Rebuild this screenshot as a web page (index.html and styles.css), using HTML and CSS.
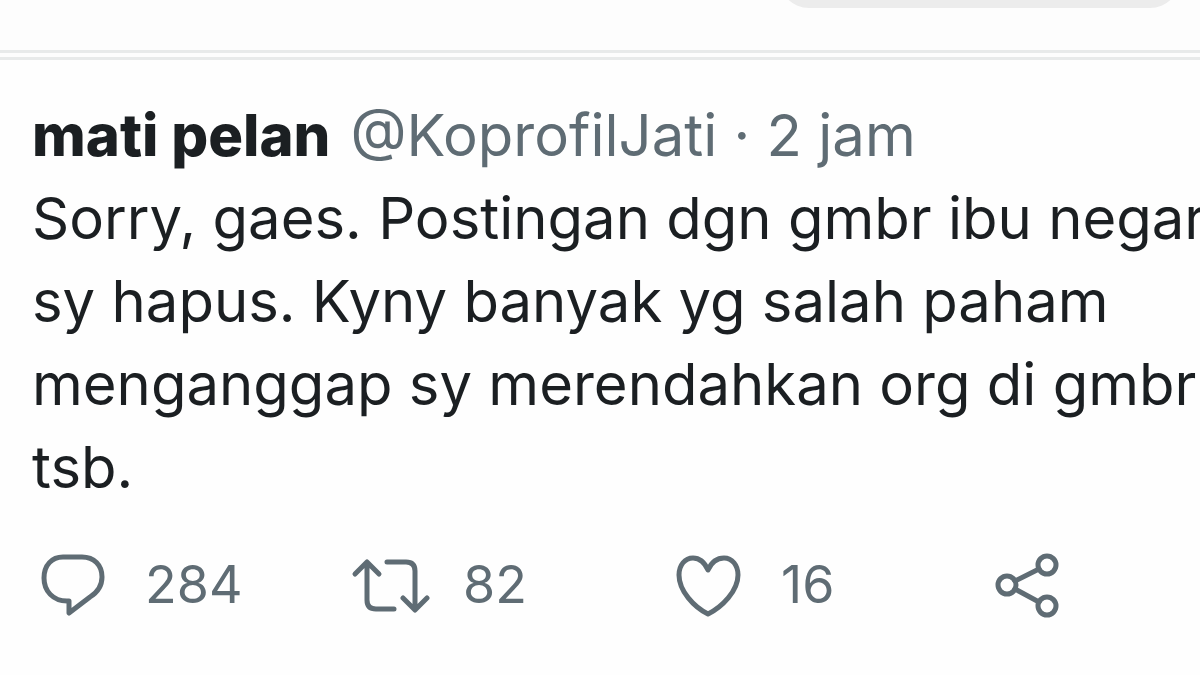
FILE: index.html
```html
<!DOCTYPE html>
<html lang="id">

<head>
    <meta charset="UTF-8">
    <meta name="viewport" content="width=device-width, initial-scale=1.0">
    <title>mati pelan</title>
    <link rel="stylesheet" href="styles.css">
</head>

<body>
    <header class="topbar">
        <div class="pill"></div>
    </header>

    <article class="tweet">
        <div class="tweet-head">
            <strong class="name">mati pelan</strong>
            <span class="meta">@KoprofilJati · 2 jam</span>
        </div>
        <p class="tweet-text">Sorry, gaes. Postingan dgn gmbr ibu negar<br>
            sy hapus. Kyny banyak yg salah paham<br>
            menganggap sy merendahkan org di gmbr<br>
            tsb.</p>

        <div class="actions">
            <button class="action" type="button" aria-label="Balas">
                <svg class="icon" viewBox="0 0 80 70">
                    <path d="M31 7H50C62 7 70 15 70 27C70 36 66 42 58 47L37 63V51H35C21 51 12 41 12 28C12 15 20 7 31 7Z" />
                </svg>
                <span>284</span>
            </button>
            <button class="action" type="button" aria-label="Retweet">
                <svg class="icon" viewBox="0 0 80 70">
                    <path d="M5 24L17 12L29 24M17 13V50Q17 59 26 59H44" />
                    <path d="M37 12H56Q65 12 65 21V59M53 48L65 60L77 48" />
                </svg>
                <span>82</span>
            </button>
            <button class="action" type="button" aria-label="Suka">
                <svg class="icon" viewBox="0 0 80 70">
                    <path d="M40 20C36 11 31 8 25 8C17 8 11 15 11 25C11 41 26 57 40 64C54 57 70 41 70 25C70 15 64 8 56 8C49 8 44 11 40 20Z" />
                </svg>
                <span>16</span>
            </button>
            <button class="action" type="button" aria-label="Bagikan">
                <svg class="icon" viewBox="0 0 80 70">
                    <circle cx="21" cy="35" r="9" />
                    <circle cx="61" cy="15" r="9" />
                    <circle cx="61" cy="56" r="9" />
                    <path d="M29 31L53 19M29 39L53 52" />
                </svg>
            </button>
        </div>
    </article>
</body>

</html>
```

FILE: styles.css
```css
:root {
    --bg: #fefefe;
    --bar: #fdfdfd;
    --pill: #ececec;
    --line: #e8eaea;
    --text: #1b1f22;
    --muted: #5f6c74;
}

body {
    font-family: Inter, sans-serif;
    background-color: var(--bg);
    color: var(--text);
    margin: 0;
    overflow: hidden;
}

.topbar {
    display: flex;
    justify-content: flex-end;
    height: 50px;
    padding-right: 20px;
    background-color: var(--bar);
    border-bottom: 10px double var(--line);
    overflow: hidden;
}

.pill {
    width: 34%;
    height: 60px;
    margin-top: -52px;
    border-radius: 30px;
    background-color: var(--pill);
}

.tweet {
    padding: 34px 34px 34px 32px;
}

.tweet-head,
.tweet-text {
    margin: 0;
    font-size: 58px;
    line-height: 83px;
    white-space: nowrap;
}

.tweet-head {
    display: flex;
    align-items: baseline;
    gap: 20px;
}

.name {
    font-weight: 800;
}

.meta {
    color: var(--muted);
}

.actions {
    display: grid;
    grid-template-columns: repeat(3, 1fr) 180px;
    margin-top: 41px;
}

.action {
    display: flex;
    align-items: center;
    gap: 33px;
    padding: 0;
    border: none;
    background: none;
    color: var(--muted);
    font-family: inherit;
    font-size: 52px;
    line-height: 70px;
    cursor: pointer;
}

.icon {
    width: 80px;
    height: 70px;
    fill: none;
    stroke: currentColor;
    stroke-width: 5;
    stroke-linecap: round;
    stroke-linejoin: round;
}
```
